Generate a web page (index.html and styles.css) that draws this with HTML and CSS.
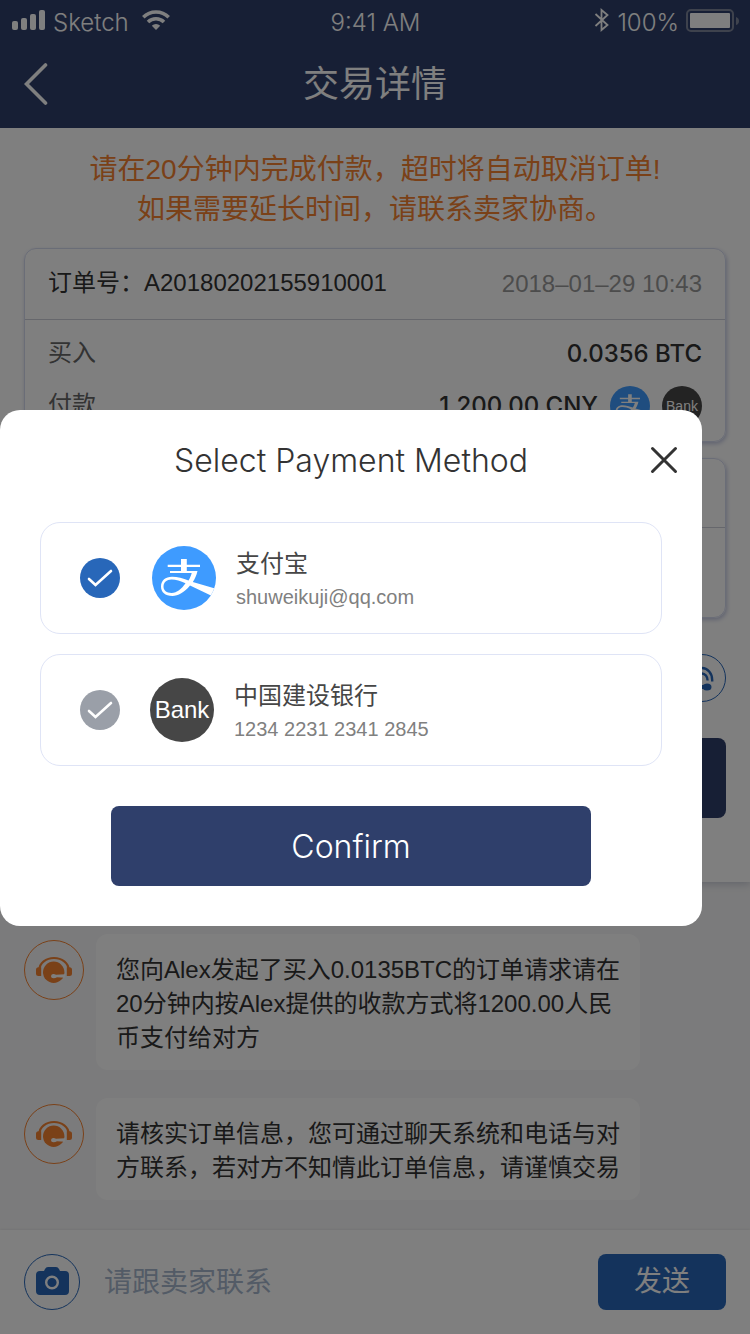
FILE: index.html
```html
<!DOCTYPE html>
<html lang="zh-CN">
<head>
<meta charset="utf-8">
<meta name="viewport" content="width=device-width, initial-scale=1">
<title>交易详情</title>
<link rel="stylesheet" href="styles.css">
</head>
<body>
<svg class="defs" aria-hidden="true">
  <symbol id="alipay" viewBox="0 0 64 64">
    <clipPath id="disc"><circle cx="32" cy="32" r="32"/></clipPath>
    <circle cx="32" cy="32" r="32" fill="#3e9bff"/>
    <g clip-path="url(#disc)">
      <path d="M29 13h5.800v5.700H48V21H34.800v4H45.500C44.500 29.500 42.800 33 40.800 36L63 42.500L60 50L38 39.600C32.500 46.500 26 50 20.500 50C13 50 9 46 9 40.500C9 34.500 13.500 30.800 20 30.800C25.500 30.800 31 32.500 36.500 34.500C38 32.200 39 29.600 39.700 27H18v-2h11v-4H15.700v-2.300H29z" fill="#fff"/>
      <path d="M33.500 37.300C28.500 34.800 24 33.500 19.500 33.500C14.500 33.500 11.500 36.500 11.500 40.500C11.500 44.500 14.500 46.900 19.500 46.900C25 46.900 29.500 43 33.500 37.300z" fill="#3e9bff"/>
    </g>
  </symbol>
  <symbol id="headset" viewBox="0 0 60 60">
    <circle cx="30" cy="30" r="29.500" fill="none" stroke="currentColor"/>
    <path d="M15.500 29.500a14.500 11.500 0 0 1 29 0" fill="none" stroke="currentColor" stroke-width="2.200"/>
    <path d="M17.200 27.300V36H14.500q-2.500 0-2.500-2.500v-3.700q0-2.500 2.500-2.500zM42.800 27.300V36h2.700q2.500 0 2.500-2.500v-3.700q0-2.500-2.500-2.500z" fill="currentColor"/>
    <circle cx="29.700" cy="32.300" r="10.700" fill="currentColor"/>
    <path d="M29 34q1.500-.2 3 .8L41 34.200V37.800L33 37.300q-1.500 1-3.500 1q-2.500 0-2.500-2.100q0-2 2-2.200z" fill="#fff"/>
  </symbol>
  <symbol id="tick" viewBox="0 0 40 40">
    <path d="M9 21l6.500 6L31 13" fill="none" stroke="#fff" stroke-width="2.600" stroke-linecap="round"/>
  </symbol>
</svg>

<div class="page">
  <header class="topbar">
    <div class="status">
      <div class="status-left">
        <svg class="signal" viewBox="0 0 34 20" fill="#fff"><rect y="11" width="6" height="9" rx="2"/><rect x="9" y="8" width="6" height="12" rx="2"/><rect x="18" y="4" width="6" height="16" rx="2"/><rect x="27" width="6" height="20" rx="2"/></svg>
        <span>Sketch</span>
        <svg class="wifi" viewBox="0 0 28 20"><path d="M1.300 7.200a18 18 0 0 1 25.400 0M6 12a11.500 11.500 0 0 1 16 0" fill="none" stroke="#fff" stroke-width="3.600"/><path d="M14 20l-4.200-4.200a6 6 0 0 1 8.400 0z" fill="#fff"/></svg>
      </div>
      <span>9:41 AM</span>
      <div class="status-right">
        <svg class="bluetooth" viewBox="0 0 16 24" fill="none" stroke="#fff" stroke-width="1.800"><path d="M1.500 6l12 11-6 5V2l6 5-12 11"/></svg>
        <span>100%</span>
        <svg class="battery" viewBox="0 0 53 24"><rect x="1" y="1" width="46" height="21" rx="4" fill="none" stroke="#7d859a" stroke-width="2"/><rect x="4" y="4" width="40" height="15" rx="1" fill="#fff"/><path d="M50 8q3 1 3 4t-3 4z" fill="#7d859a"/></svg>
      </div>
    </div>
    <div class="nav">
      <button class="back" aria-label="返回"><svg viewBox="0 0 24 42" fill="none" stroke="#fff" stroke-width="3.600" stroke-linecap="round"><path d="M21.500 2L2.500 21l19 19"/></svg></button>
      <h1 class="nav-title">交易详情</h1>
    </div>
  </header>

  <main class="order">
    <p class="notice">请在20分钟内完成付款，超时将自动取消订单!<br>如果需要延长时间，请联系卖家协商。</p>
    <section class="card">
      <div class="card-head"><span class="number">订单号：A20180202155910001</span><time class="date">2018–01–29 10:43</time></div>
      <div class="card-body">
        <div class="row"><span class="label">买入</span><span class="value">0.0356 BTC</span></div>
        <div class="row"><span class="label">付款</span><span class="value">1,200.00 CNY</span>
          <svg class="mini"><use href="#alipay"/></svg><span class="mini bank">Bank</span></div>
      </div>
    </section>
    <section class="card card-short"><div class="card-head"></div></section>
    <div class="actions">
      <button class="phone" aria-label="电话"><svg viewBox="0 0 48 48" fill="none" stroke="currentColor"><circle cx="24" cy="24" r="23.500"/><path d="M13.800 27.500v-1.500a10.200 12 0 0 1 20.400 0v1.500M18.400 26.500a5.600 7 0 0 1 11.200 0" stroke-width="2.400"/><path d="M15 33q0-3.500 4-3.500 2.500 0 4 1.500h2q1.500-1.500 4-1.500 4.500 0 4.500 3.500 0 3.500-4.500 3.500-2.500 0-4-1.500h-2q-1.500 1.500-4 1.500-4 0-4-3.500z" fill="currentColor" stroke="none"/></svg></button>
      <button class="primary pay" aria-label="付款"></button>
    </div>
  </main>

  <section class="chat">
    <div class="message"><svg class="avatar"><use href="#headset"/></svg><p class="bubble">您向Alex发起了买入0.0135BTC的订单请求请在<br>20分钟内按Alex提供的收款方式将1200.00人民<br>币支付给对方</p></div>
    <div class="message"><svg class="avatar"><use href="#headset"/></svg><p class="bubble">请核实订单信息，您可通过聊天系统和电话与对<br>方联系，若对方不知情此订单信息，请谨慎交易</p></div>
  </section>

  <footer class="composer">
    <button class="camera" aria-label="拍照"><svg viewBox="0 0 56 56"><circle cx="28" cy="28" r="27.500" fill="none" stroke="currentColor"/><path d="M16 17h4l1-2q1-2 3-2h8q2 0 3 2l1 2h5q4 0 4 4v16q0 4-4 4H16q-4 0-4-4V21q0-4 4-4z" fill="currentColor"/><circle cx="28" cy="28.500" r="5.800" fill="none" stroke="#fff" stroke-width="2.400"/></svg></button>
    <input class="entry" type="text" placeholder="请跟卖家联系" aria-label="消息">
    <button class="send">发送</button>
  </footer>
</div>

<div class="overlay">
  <form class="dialog" role="dialog" aria-labelledby="dialog-title">
    <div class="dialog-head">
      <h2 class="dialog-title" id="dialog-title">Select Payment Method</h2>
      <button type="button" class="close" aria-label="Close"><svg viewBox="0 0 28 28" fill="none" stroke="#333" stroke-width="3" stroke-linecap="round"><path d="M2.500 2.500l23 23M25.500 2.500l-23 23"/></svg></button>
    </div>
    <div class="options">
      <label class="option">
        <span class="check"><input type="radio" name="method" checked><svg><use href="#tick"/></svg></span>
        <svg class="logo"><use href="#alipay"/></svg>
        <span class="detail"><span class="name">支付宝</span><span class="account">shuweikuji@qq.com</span></span>
      </label>
      <label class="option option-bank">
        <span class="check"><input type="radio" name="method"><svg><use href="#tick"/></svg></span>
        <span class="logo bank">Bank</span>
        <span class="detail"><span class="name">中国建设银行</span><span class="account">1234 2231 2341 2845</span></span>
      </label>
    </div>
    <button type="button" class="primary confirm">Confirm</button>
  </form>
</div>
</body>
</html>
```
FILE: styles.css
```css
:root {
  --navy: #2f3f6b;
  --blue: #2867b9;
  --orange: #f58231;
  --line: #dfe4f6;
}

* { box-sizing: border-box; }

body {
  margin: 0;
  font-family: "Liberation Sans", "Noto Sans CJK SC", sans-serif;
  font-size: 24px;
  color: #333;
}

h1, h2, p { margin: 0; font-weight: 400; }

button {
  padding: 0;
  border: 0;
  background: none;
  font: inherit;
  color: inherit;
  cursor: pointer;
}

svg { display: block; }
.defs { position: absolute; width: 0; height: 0; }

.page {
  display: flex;
  flex-direction: column;
  min-height: 100vh;
  background: #f7f7f8;
}

.topbar { background: var(--navy); color: #fff; }

.status {
  display: grid;
  grid-template-columns: 1fr auto 1fr;
  align-items: center;
  height: 40px;
  padding: 6px 11px 0 12px;
  font-family: Inter, sans-serif;
  font-weight: 300;
  line-height: 32px;
}
.status-left, .status-right { display: flex; align-items: center; gap: 7px; }
.status-right { justify-content: flex-end; }
.signal { width: 34px; height: 20px; margin-bottom: 6px; }
.wifi { width: 28px; height: 20px; margin: 0 0 6px 6px; }
.bluetooth { width: 16px; height: 24px; margin-bottom: 7px; }
.battery { width: 53px; height: 24px; margin-bottom: 5px; }

.nav {
  display: grid;
  grid-template-columns: 1fr auto 1fr;
  align-items: center;
  height: 88px;
  padding: 0 24px;
}
.back { width: 24px; height: 42px; }
.nav-title { padding-top: 2px; font-size: 36px; line-height: 48px; }

.order {
  padding: 22px 24px 64px;
  background: #fff;
  box-shadow: 0 2px 8px rgba(47, 63, 107, .25);
}
.notice {
  margin-bottom: 18px;
  font-size: 28px;
  line-height: 40px;
  text-align: center;
  color: var(--orange);
}

.card {
  min-height: 194px;
  margin-bottom: 16px;
  border: 1px solid #d5daef;
  border-radius: 12px;
  box-shadow: 1px 2px 4px rgba(80, 95, 170, .35);
}
.card-head {
  display: flex;
  align-items: center;
  justify-content: space-between;
  height: 71px;
  padding: 0 23px;
  border-bottom: 1px solid #ccced8;
}
.card-short { min-height: 160px; margin-bottom: 36px; }
.card-short .card-head { height: 69px; }
.card-body { padding: 8px 23px 0; }
.number, .date { line-height: 28px; }
.number { padding-bottom: 2px; }
.date { color: #999; }
.row { display: flex; align-items: center; height: 52px; line-height: 28px; }
.label { flex: 1; padding-bottom: 2px; color: #666; }
.value { font-family: Inter, sans-serif; font-weight: 500; }
.mini { width: 40px; height: 40px; margin-left: 12px; }
.bank {
  display: grid;
  place-items: center;
  border-radius: 50%;
  background: #464646;
  color: #fff;
}
.mini.bank { font-size: 14px; }

.actions { display: flex; flex-direction: column; gap: 36px; }
.phone { width: 48px; height: 48px; align-self: flex-end; color: var(--blue); }
.primary {
  height: 80px;
  border-radius: 8px;
  background: var(--navy);
  color: #fff;
}

.chat {
  display: flex;
  flex: 1;
  flex-direction: column;
  gap: 28px;
  padding: 52px 24px 28px;
}
.message { display: flex; align-items: flex-start; gap: 12px; }
.avatar { flex: none; width: 60px; height: 60px; margin-top: 6px; color: var(--orange); }
.bubble {
  padding: 19px 20px 15px;
  border-radius: 12px;
  background: #fff;
  line-height: 34px;
}

.composer {
  display: flex;
  align-items: center;
  gap: 24px;
  height: 104px;
  padding: 0 24px;
  background: #fff;
  box-shadow: 0 -1px 2px rgba(0, 0, 0, .06);
}
.camera { width: 56px; height: 56px; color: var(--blue); }
.entry {
  flex: 1;
  min-width: 0;
  padding: 2px 0 0;
  border: 0;
  background: none;
  font: inherit;
  font-size: 28px;
}
.entry::placeholder { color: #a6b6cd; }
.send {
  width: 128px;
  height: 56px;
  border-radius: 8px;
  background: var(--blue);
  font-size: 28px;
  line-height: 40px;
  color: #fff;
}

.overlay {
  position: fixed;
  inset: 0;
  display: flex;
  align-items: center;
  padding: 2px 48px 0 0;
  background: rgba(0, 0, 0, .5);
}
.dialog {
  display: flex;
  flex: 1;
  flex-direction: column;
  padding-bottom: 40px;
  border-radius: 20px;
  background: #fff;
}
.dialog-head {
  display: grid;
  grid-template-columns: 1fr auto 1fr;
  align-items: center;
  height: 100px;
  margin-bottom: 12px;
  padding: 0 24px;
}
.dialog-title {
  grid-column: 2;
  font-family: Inter, sans-serif;
  font-size: 32px;
  font-weight: 300;
}
.close { width: 28px; height: 28px; justify-self: end; }

.options { display: flex; flex-direction: column; gap: 20px; padding: 0 40px; }
.option {
  display: flex;
  align-items: center;
  height: 112px;
  padding: 0 39px;
  border: 1px solid var(--line);
  border-radius: 20px;
}
.check { display: grid; width: 40px; height: 40px; margin-right: 32px; }
.option-bank .check { margin-right: 30px; }
.check > * { grid-area: 1 / 1; width: 40px; height: 40px; margin: 0; }
.check svg { z-index: 1; pointer-events: none; }
.check input { appearance: none; border-radius: 50%; background: #9a9fa8; }
.check input:checked { background: var(--blue); }
.logo { width: 64px; height: 64px; margin-right: 20px; }
.detail { display: flex; flex-direction: column; padding-top: 4px; }
.name { line-height: 34px; color: #464646; }
.account { font-size: 20px; line-height: 32px; color: #808080; }
.confirm { width: 480px; max-width: 80%; margin: 40px auto 0; font-family: Inter, sans-serif; font-size: 32px; font-weight: 300; }
```
